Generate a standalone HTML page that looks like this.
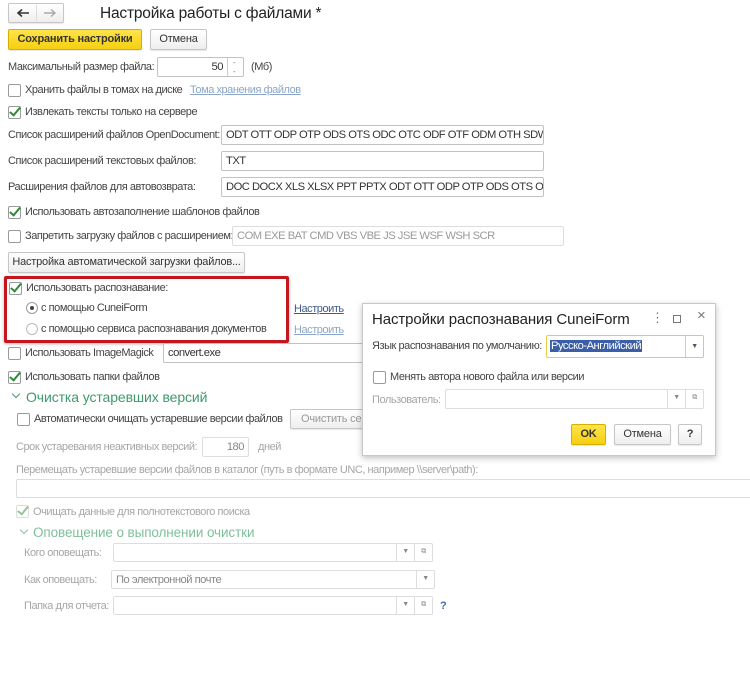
<!DOCTYPE html>
<html><head><meta charset="utf-8"><style>
*{box-sizing:border-box}
body{margin:0;width:750px;height:680px;background:#fff;font-family:"Liberation Sans",Arial,sans-serif;font-size:11px;letter-spacing:-0.45px;color:#444;position:relative;overflow:hidden}
.a{position:absolute;white-space:nowrap}
.t{position:absolute;white-space:nowrap;line-height:14px}
.inp{position:absolute;border:1px solid #c2c2c2;border-radius:2px;background:#fff;padding:2px 4px;font-size:11.2px;letter-spacing:-0.5px;color:#333;overflow:hidden;white-space:nowrap;line-height:14px}
.cb{position:absolute;width:13px;height:13px;border:1px solid #9a9a9a;border-radius:2px;background:#fff}
.ck::after{content:"";position:absolute;left:3px;top:-2px;width:4px;height:9px;border:solid #2f8a3a;border-width:0 2.5px 2.5px 0;transform:rotate(40deg)}
.btn{position:absolute;border:1px solid #c6c6c6;border-radius:2px;background:linear-gradient(#fff,#eee);text-align:center;font-size:11px;letter-spacing:-0.2px;color:#333;line-height:18px;box-shadow:0 1px 1px rgba(0,0,0,.1);white-space:nowrap}
.y{background:linear-gradient(#ffe44a,#f5cf10);border-color:#d6b000;font-weight:bold;color:#333}
.g{color:#a6a6a6}
.lnk{color:#3d5a8c;text-decoration:underline}
.rad{position:absolute;width:12px;height:12px;border:1px solid #9a9a9a;border-radius:50%;background:#fff}
.dd{position:absolute;right:0;top:0;bottom:0;width:18px;border-left:1px solid #ddd;text-align:center;color:#888;font-size:7px;line-height:16px}
.chev{position:absolute;width:6px;height:6px;border:solid;border-width:0 1.5px 1.5px 0;transform:rotate(45deg)}
</style></head><body>
<div class="btn" style="left:8px;top:3px;width:56px;height:20px"></div>
<div class="a" style="left:36px;top:5px;width:1px;height:16px;background:#ddd"></div>
<svg class="a" style="left:16px;top:8px" width="14" height="10"><path d="M13 5H2M6 1.5L2 5L6 8.5" stroke="#333" stroke-width="1.6" fill="none"/></svg>
<svg class="a" style="left:43px;top:8px" width="14" height="10"><path d="M1 5H12M8 1.5L12 5L8 8.5" stroke="#aaa" stroke-width="1.4" fill="none"/></svg>
<div class="t" style="left:100px;top:4px;font-size:15.5px;line-height:20px;color:#222;letter-spacing:-0.2px">Настройка работы с файлами *</div>
<div class="btn y" style="left:8px;top:29px;width:134px;height:21px">Сохранить настройки</div>
<div class="btn" style="left:150px;top:29px;width:57px;height:21px">Отмена</div>

<div class="t" style="left:8px;top:60px">Максимальный размер файла:</div>
<div class="inp" style="left:157px;top:57px;width:87px;height:20px;text-align:right;padding-right:20px">50</div>
<div class="a" style="left:227px;top:58px;width:1px;height:18px;background:#ccc"></div>
<div class="a" style="left:233px;top:58px;font-size:8px;color:#777;line-height:9px">-<br>-</div>
<div class="t" style="left:251px;top:60px">(Мб)</div>

<div class="cb" style="left:8px;top:84px"></div>
<div class="t" style="left:25px;top:83px">Хранить файлы в томах на диске</div>
<div class="t lnk" style="left:190px;top:83px;color:#8aa6c8">Тома хранения файлов</div>

<div class="cb ck" style="left:8px;top:106px"></div>
<div class="t" style="left:25px;top:105px">Извлекать тексты только на сервере</div>

<div class="t" style="left:8px;top:128px">Список расширений файлов OpenDocument:</div>
<div class="inp" style="left:221px;top:125px;width:323px;height:20px">ODT OTT ODP OTP ODS OTS ODC OTC ODF OTF ODM OTH SDW</div>
<div class="t" style="left:8px;top:154px">Список расширений текстовых файлов:</div>
<div class="inp" style="left:221px;top:151px;width:323px;height:20px">TXT</div>
<div class="t" style="left:8px;top:180px">Расширения файлов для автовозврата:</div>
<div class="inp" style="left:221px;top:177px;width:323px;height:20px">DOC DOCX XLS XLSX PPT PPTX ODT OTT ODP OTP ODS OTS ODC</div>

<div class="cb ck" style="left:8px;top:206px"></div>
<div class="t" style="left:25px;top:205px">Использовать автозаполнение шаблонов файлов</div>
<div class="cb" style="left:8px;top:230px"></div>
<div class="t" style="left:25px;top:229px">Запретить загрузку файлов с расширением:</div>
<div class="inp g" style="left:232px;top:226px;width:332px;height:20px;border-color:#ddd;color:#9a9a9a">COM EXE BAT CMD VBS VBE JS JSE WSF WSH SCR</div>
<div class="btn" style="left:8px;top:252px;width:237px;height:21px">Настройка автоматической загрузки файлов...</div>

<div class="a" style="left:4px;top:276px;width:285px;height:67px;border:3px solid #c4161c;border-radius:2px;box-shadow:0 1px 3px rgba(0,0,0,.3)"></div>
<div class="cb ck" style="left:9px;top:282px"></div>
<div class="t" style="left:26px;top:281px">Использовать распознавание:</div>
<div class="rad" style="left:26px;top:302px"><div style="position:absolute;left:3px;top:3px;width:4px;height:4px;border-radius:50%;background:#444"></div></div>
<div class="t" style="left:41px;top:301px">с помощью CuneiForm</div>
<div class="rad" style="left:26px;top:323px;border-color:#bbb"></div>
<div class="t" style="left:41px;top:322px">с помощью сервиса распознавания документов</div>
<div class="t lnk" style="left:294px;top:302px">Настроить</div>
<div class="t lnk" style="left:294px;top:323px;color:#8aa6c8">Настроить</div>

<div class="cb" style="left:8px;top:347px"></div>
<div class="t" style="left:25px;top:346px">Использовать ImageMagick</div>
<div class="inp" style="left:163px;top:343px;width:210px;height:20px">convert.exe</div>
<div class="cb ck" style="left:8px;top:371px"></div>
<div class="t" style="left:25px;top:370px">Использовать папки файлов</div>
<div class="chev" style="left:13px;top:391px;color:#4a9a6a"></div>
<div class="t" style="left:26px;top:389px;font-size:14px;line-height:17px;color:#3f9a6b;letter-spacing:-0.1px">Очистка устаревших версий</div>
<div class="cb" style="left:17px;top:413px"></div>
<div class="t" style="left:34px;top:412px">Автоматически очищать устаревшие версии файлов</div>
<div class="btn" style="left:290px;top:409px;width:80px;height:20px;color:#999;text-align:left;padding-left:10px">Очистить сей</div>
<div class="t g" style="left:16px;top:440px">Срок устаревания неактивных версий:</div>
<div class="inp" style="left:202px;top:437px;width:47px;height:20px;text-align:right;border-color:#ddd;color:#888">180</div>
<div class="t g" style="left:258px;top:440px">дней</div>
<div class="t g" style="left:16px;top:463px">Перемещать устаревшие версии файлов в каталог (путь в формате UNC, например \\server\path):</div>
<div class="inp" style="left:16px;top:479px;width:740px;height:19px;border-color:#ddd"></div>
<div class="cb ck" style="left:16px;top:505px;border-color:#bbb;opacity:.5"></div>
<div class="t g" style="left:33px;top:505px">Очищать данные для полнотекстового поиска</div>
<div class="chev" style="left:21px;top:527px;color:#8cc0a4"></div>
<div class="t" style="left:33px;top:525px;font-size:13.5px;line-height:16px;color:#7fbf9c;letter-spacing:-0.1px">Оповещение о выполнении очистки</div>
<div class="t g" style="left:24px;top:546px">Кого оповещать:</div>
<div class="inp" style="left:113px;top:543px;width:320px;height:19px;border-color:#ddd"><div class="dd" style="right:18px">&#9660;</div><div class="dd">&#10697;</div></div>
<div class="t g" style="left:24px;top:573px">Как оповещать:</div>
<div class="inp" style="left:111px;top:570px;width:324px;height:19px;border-color:#ddd;color:#888">По электронной почте<div class="dd">&#9660;</div></div>
<div class="t g" style="left:24px;top:599px">Папка для отчета:</div>
<div class="inp" style="left:113px;top:596px;width:320px;height:19px;border-color:#ddd"><div class="dd" style="right:18px">&#9660;</div><div class="dd">&#10697;</div></div>
<div class="t" style="left:440px;top:599px;color:#3d6cb0;font-weight:bold">?</div>

<div class="a" style="left:362px;top:303px;width:354px;height:153px;background:#fff;border:1px solid #c8c8c8;box-shadow:0 2px 6px rgba(0,0,0,.25)"></div>
<div class="t" style="left:372px;top:311px;font-size:15px;line-height:17px;color:#222;letter-spacing:-0.1px">Настройки распознавания CuneiForm</div>
<div class="t" style="left:651px;top:311px;font-size:13px;color:#777">&#8942;</div>
<div class="a" style="left:673px;top:315px;width:8px;height:8px;border:1px solid #777"></div>
<div class="t" style="left:697px;top:309px;font-size:15px;color:#777">&#215;</div>
<div class="t" style="left:372px;top:339px">Язык распознавания по умолчанию:</div>
<div class="inp" style="left:546px;top:335px;width:158px;height:23px;border:1px solid #e8cc45;padding:3px 3px"><span style="background:#3b5ea8;color:#fff;padding:0 1px">Русско-Английский</span><div class="dd" style="border-left:1px solid #ccc;line-height:21px;color:#555">&#9660;</div></div>
<div class="cb" style="left:373px;top:371px"></div>
<div class="t" style="left:390px;top:370px">Менять автора нового файла или версии</div>
<div class="t g" style="left:372px;top:393px">Пользователь:</div>
<div class="inp" style="left:445px;top:389px;width:259px;height:20px;border-color:#ddd"><div class="dd" style="right:18px">&#9660;</div><div class="dd">&#10697;</div></div>
<div class="btn y" style="left:571px;top:424px;width:35px;height:21px">OK</div>
<div class="btn" style="left:614px;top:424px;width:57px;height:21px">Отмена</div>
<div class="btn" style="left:678px;top:424px;width:24px;height:21px;font-weight:bold">?</div>
</body></html>
